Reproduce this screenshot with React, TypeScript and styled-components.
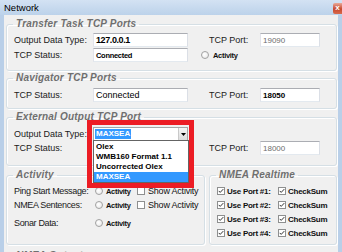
import * as React from "react";
import styled, { createGlobalStyle } from "styled-components";

const GlobalStyle = createGlobalStyle`
  html, body {
    margin: 0;
    padding: 0;
    background: #f0f0f0;
  }
  body {
    font-family: "Liberation Sans", Arial, sans-serif;
    font-size: 9px;
    color: #000;
  }
`;

const Window = styled.div`
  width: 342px;
  height: 252px;
  overflow: hidden;
  display: flex;
  flex-direction: column;
  background: #b9cfe8;
`;

const TitleBar = styled.div`
  flex: none;
  height: 15px;
  display: flex;
  justify-content: space-between;
  padding-left: 4px;
  background: linear-gradient(to bottom, #d3e2f3, #bcd2ea);
`;

const Caption = styled.span`
  font-size: 9.5px;
  line-height: 15px;
  color: #000;
`;

const CloseButton = styled.span`
  width: 9px;
  height: 11px;
  margin-top: 3px;
  border-radius: 2px 0 0 2px;
  background: linear-gradient(to bottom, #e9a999, #c8492f 55%, #d8694c);
  color: #fff;
  font: bold 8px/10px "Liberation Sans", Arial, sans-serif;
  text-align: center;
`;

const Body = styled.div`
  flex: 1;
  margin: 0 4px;
  padding: 3px 1px 0 2px;
  background: #f0f0f0;
  display: flex;
  flex-direction: column;
`;

const Group = styled.fieldset<{ $h: number; $mt?: number; $pt?: number; $w?: number }>`
  box-sizing: border-box;
  flex: none;
  min-width: 0;
  margin: ${({ $mt }) => $mt ?? 0}px 0 0 0;
  height: ${({ $h }) => $h}px;
  width: ${({ $w }) => ($w ? `${$w}px` : "auto")};
  padding: ${({ $pt }) => $pt ?? 3}px 0 0 7px;
  border: 1px solid #d5dfe5;
  border-radius: 3px;
  box-shadow: 1px 1px 0 #fff, inset 1px 1px 0 #fff;
`;

const Legend = styled.legend`
  margin-left: -1px;
  padding: 0 3px;
  font: italic bold 10px/12px "Liberation Sans", Arial, sans-serif;
  letter-spacing: 0.2px;
  color: #6f6f6f;
`;

const GroupRow = styled.div`
  display: flex;
  gap: 4px;
  margin-top: 3px;
`;

const Row = styled.div<{ $mt?: number }>`
  display: flex;
  align-items: center;
  height: 14px;
  margin-top: ${({ $mt }) => $mt ?? 0}px;
`;

const Label = styled.span<{ $w?: number }>`
  flex: none;
  width: ${({ $w }) => $w ?? 79}px;
  font-size: 9px;
  white-space: nowrap;
  color: #1a1a1a;
`;

const ActivityLabel = styled(Label)`
  width: 81px;
  letter-spacing: -0.35px;
`;

const PortLabel = styled(Label)`
  margin-left: 21px;
  width: 51px;
`;

const TextBox = styled.div<{ $w: number }>`
  box-sizing: border-box;
  flex: none;
  width: ${({ $w }) => $w}px;
  height: 14px;
  padding-left: 2px;
  display: flex;
  align-items: center;
  background: #fff;
  border: 1px solid;
  border-color: #abadb3 #dbdfe6 #e3e9ef #e2e3ea;
  white-space: nowrap;
  overflow: hidden;
`;

const Value = styled.span<{ $kind: "ip" | "status" | "plain" | "port" | "muted" }>`
  color: ${({ $kind }) => ($kind === "muted" ? "#6d6d6d" : "#000")};
  font-weight: ${({ $kind }) => ($kind === "plain" || $kind === "muted" ? "normal" : "bold")};
  font-size: ${({ $kind }) =>
    $kind === "ip" ? 9 : $kind === "status" ? 7.5 : $kind === "plain" ? 9 : 8}px;
  letter-spacing: ${({ $kind }) => ($kind === "ip" ? -0.4 : $kind === "status" ? -0.3 : 0)}px;
`;

const Option = styled.span<{ $ml?: number; $w?: number }>`
  flex: none;
  display: flex;
  align-items: center;
  margin-left: ${({ $ml }) => $ml ?? 0}px;
  width: ${({ $w }) => ($w ? `${$w}px` : "auto")};
`;

const Radio = styled.span`
  box-sizing: border-box;
  flex: none;
  width: 8px;
  height: 8px;
  border-radius: 50%;
  border: 1px solid #a2a2a2;
  background: radial-gradient(circle at 40% 40%, #fff, #e6e6e6);
`;

const Check = styled.span`
  box-sizing: border-box;
  flex: none;
  width: 8px;
  height: 8px;
  border: 1px solid #8e8f8f;
  background: #fff;
  display: flex;
  align-items: center;
  justify-content: center;
`;

const OptionText = styled.span<{ $gap?: number; $plain?: boolean }>`
  margin-left: ${({ $gap }) => $gap ?? 3}px;
  font-size: ${({ $plain }) => ($plain ? 9 : 7.5)}px;
  font-weight: ${({ $plain }) => ($plain ? "normal" : "bold")};
  letter-spacing: ${({ $plain }) => ($plain ? -0.2 : -0.3)}px;
  white-space: nowrap;
  color: #111;
`;

const CheckText = styled.span`
  margin-left: 2px;
  font-size: 8px;
  font-weight: bold;
  letter-spacing: -0.25px;
  white-space: nowrap;
  color: #111;
`;

const ComboWrap = styled.div`
  position: relative;
  flex: none;
  width: 95px;
  height: 14px;
`;

const ComboBox = styled.div`
  box-sizing: border-box;
  width: 95px;
  height: 14px;
  display: flex;
  align-items: center;
  padding-left: 1px;
  background: #fff;
  border: 1px solid #a6a6a6;
`;

const ComboText = styled.span`
  flex: 1;
  display: flex;
  align-items: center;
`;

const Selected = styled.span`
  padding: 0 1px;
  background: #3399ff;
  color: #fff;
  font-size: 8px;
  line-height: 10px;
  font-weight: bold;
`;

const ArrowButton = styled.span`
  box-sizing: border-box;
  width: 9px;
  height: 12px;
  display: flex;
  align-items: center;
  justify-content: center;
  background: linear-gradient(to bottom, #f6f6f6, #dcdcdc);
  border-left: 1px solid #c9c9c9;
`;

const DropList = styled.div`
  position: absolute;
  left: 0;
  top: 13px;
  box-sizing: border-box;
  width: 96px;
  padding-top: 1px;
  background: #fff;
  border: 1px solid #646464;
  z-index: 2;
`;

const DropItem = styled.div<{ $active?: boolean }>`
  height: 10px;
  line-height: 10px;
  padding-left: 2px;
  font-size: 8px;
  font-weight: bold;
  white-space: nowrap;
  background: ${({ $active }) => ($active ? "#3399ff" : "transparent")};
  color: ${({ $active }) => ($active ? "#fff" : "#000")};
`;

const Highlight = styled.div`
  position: absolute;
  left: -6px;
  top: -7px;
  width: 107px;
  height: 68px;
  box-sizing: border-box;
  border: 5px solid #ec1c24;
  z-index: 3;
  pointer-events: none;
`;

function CheckMark() {
  return (
    <svg width="6" height="6" viewBox="0 0 6 6">
      <path d="M0.7 2.9 L2.2 4.4 L5.3 1.1" fill="none" stroke="#333" strokeWidth="1" />
    </svg>
  );
}

function Arrow() {
  return (
    <svg width="5" height="3" viewBox="0 0 5 3">
      <path d="M0 0 H5 L2.5 3 Z" fill="#000" />
    </svg>
  );
}

const ports = [1, 2, 3, 4];

export default function App() {
  return (
    <>
      <GlobalStyle />
      <Window>
        <TitleBar>
          <Caption>Network</Caption>
          <CloseButton>x</CloseButton>
        </TitleBar>
        <Body>
          <Group $h={53} $pt={3}>
            <Legend>Transfer Task TCP Ports</Legend>
            <Row>
              <Label>Output Data Type:</Label>
              <TextBox $w={95}>
                <Value $kind="ip">127.0.0.1</Value>
              </TextBox>
              <PortLabel>TCP Port:</PortLabel>
              <TextBox $w={60}>
                <Value $kind="muted">19090</Value>
              </TextBox>
            </Row>
            <Row $mt={1}>
              <Label>TCP Status:</Label>
              <TextBox $w={95}>
                <Value $kind="status">Connected</Value>
              </TextBox>
              <Option $ml={13}>
                <Radio />
                <OptionText $gap={4}>Activity</OptionText>
              </Option>
            </Row>
          </Group>

          <Group $h={37} $mt={1} $pt={4}>
            <Legend>Navigator TCP Ports</Legend>
            <Row>
              <Label>TCP Status:</Label>
              <TextBox $w={95}>
                <Value $kind="plain">Connected</Value>
              </TextBox>
              <PortLabel>TCP Port:</PortLabel>
              <TextBox $w={60}>
                <Value $kind="port">18050</Value>
              </TextBox>
            </Row>
          </Group>

          <Group $h={55} $mt={2} $pt={4}>
            <Legend>External Output TCP Port</Legend>
            <Row>
              <Label>Output Data Type:</Label>
              <ComboWrap>
                <ComboBox>
                  <ComboText>
                    <Selected>MAXSEA</Selected>
                  </ComboText>
                  <ArrowButton>
                    <Arrow />
                  </ArrowButton>
                </ComboBox>
                <DropList>
                  <DropItem>Olex</DropItem>
                  <DropItem>WMB160 Format 1.1</DropItem>
                  <DropItem>Uncorrected Olex</DropItem>
                  <DropItem $active>MAXSEA</DropItem>
                </DropList>
                <Highlight />
              </ComboWrap>
            </Row>
            <Row>
              <Label>TCP Status:</Label>
              <TextBox $w={95} />
              <PortLabel>TCP Port:</PortLabel>
              <TextBox $w={60}>
                <Value $kind="muted">18000</Value>
              </TextBox>
            </Row>
          </Group>

          <GroupRow>
            <Group $h={76} $w={199} $pt={3}>
              <Legend>Activity</Legend>
              <Row>
                <ActivityLabel>Ping Start Message:</ActivityLabel>
                <Option $w={42}>
                  <Radio />
                  <OptionText>Activity</OptionText>
                </Option>
                <Option>
                  <Check />
                  <OptionText $gap={3} $plain>
                    Show Activity
                  </OptionText>
                </Option>
              </Row>
              <Row>
                <ActivityLabel>NMEA Sentences:</ActivityLabel>
                <Option $w={42}>
                  <Radio />
                  <OptionText>Activity</OptionText>
                </Option>
                <Option>
                  <Check />
                  <OptionText $gap={3} $plain>
                    Show Activity
                  </OptionText>
                </Option>
              </Row>
              <Row $mt={4}>
                <ActivityLabel>Sonar Data:</ActivityLabel>
                <Option>
                  <Radio />
                  <OptionText>Activity</OptionText>
                </Option>
              </Row>
            </Group>

            <Group $h={76} $w={128} $pt={3}>
              <Legend>NMEA Realtime</Legend>
              {ports.map((n) => (
                <Row key={n}>
                  <Option $w={61}>
                    <Check>
                      <CheckMark />
                    </Check>
                    <CheckText>Use Port #{n}:</CheckText>
                  </Option>
                  <Option>
                    <Check>
                      <CheckMark />
                    </Check>
                    <CheckText>CheckSum</CheckText>
                  </Option>
                </Row>
              ))}
            </Group>
          </GroupRow>

          <Group $h={40} $mt={5} $pt={3}>
            <Legend>NMEA Output</Legend>
          </Group>
        </Body>
      </Window>
    </>
  );
}
